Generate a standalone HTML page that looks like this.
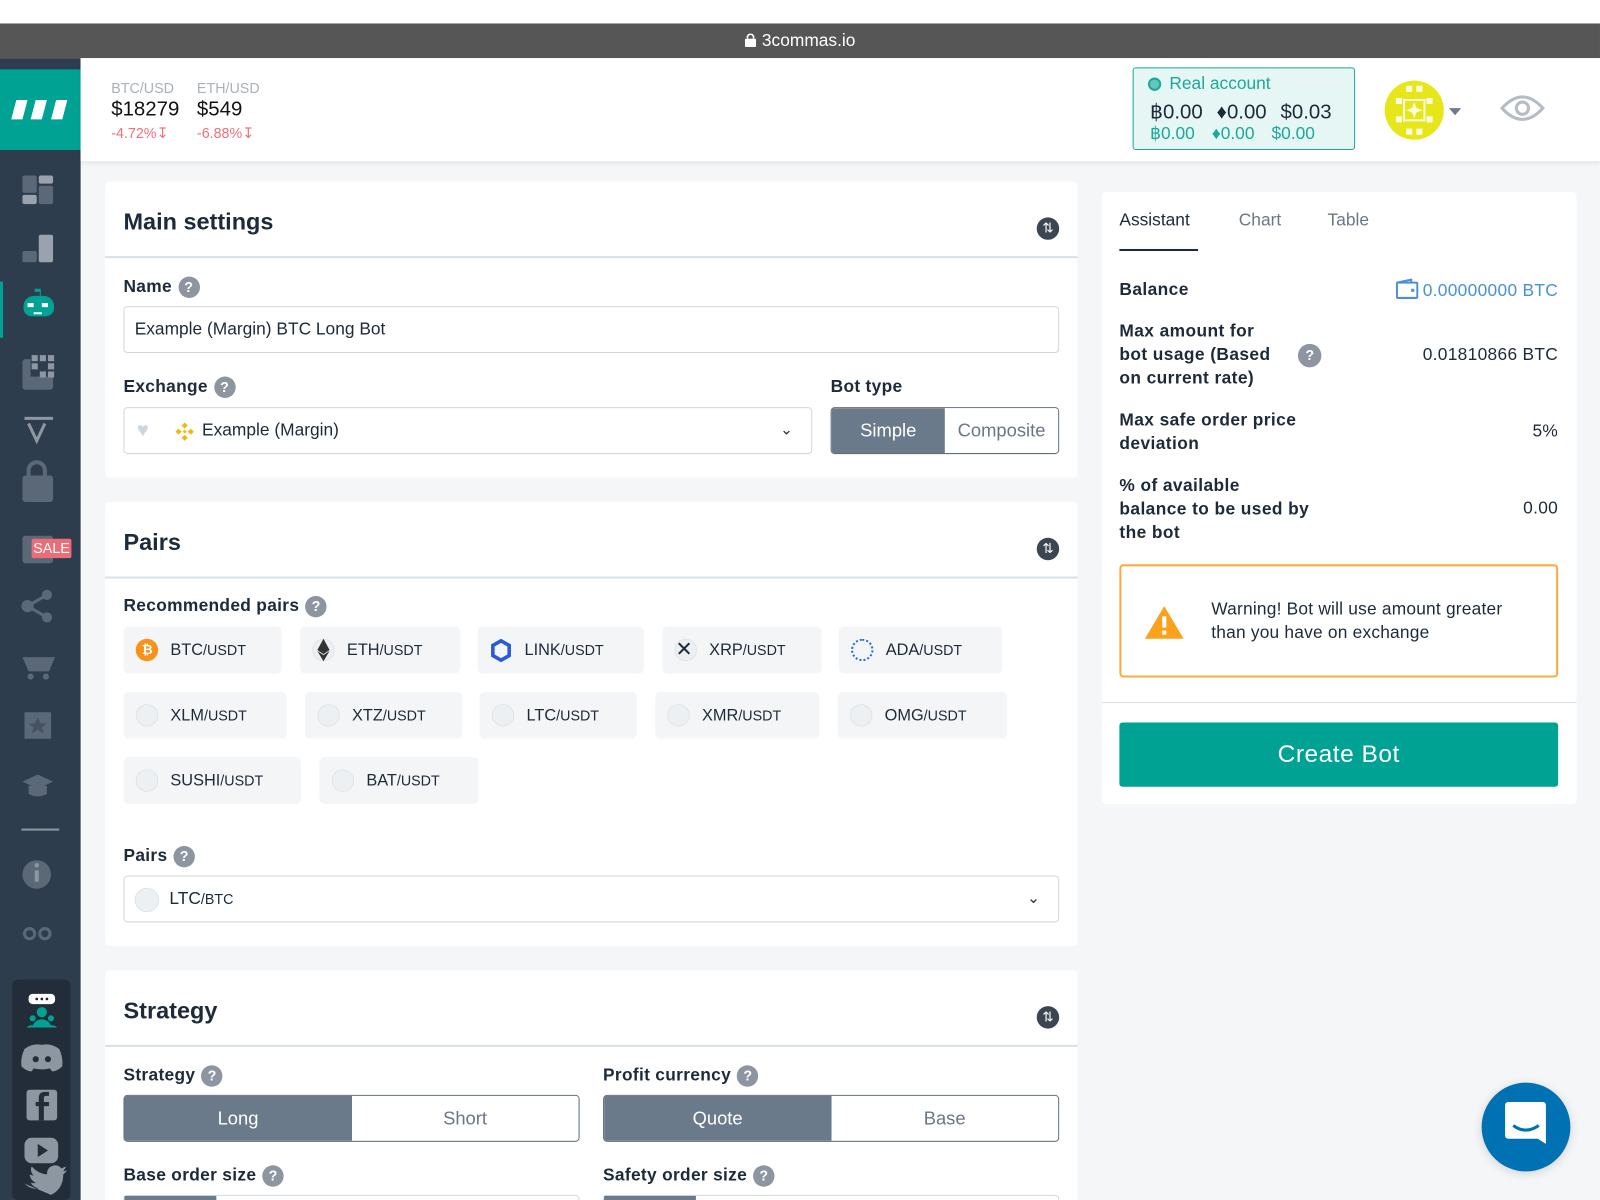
<!DOCTYPE html>
<html><head><meta charset="utf-8">
<style>
html,body{margin:0;padding:0;width:1600px;height:1200px;overflow:hidden;background:#f5f6f8;}
#w{position:absolute;left:0;top:0;width:1568px;height:1176px;transform:scale(1.0204);transform-origin:0 0;font-family:"Liberation Sans",sans-serif;color:#1d2a3a;background:#f5f6f8;overflow:hidden}
.a{position:absolute}
.card{position:absolute;background:#fff;border-radius:4px}
.h{position:absolute;left:18px;font-size:23px;font-weight:bold;color:#1d2a3a}
.div{position:absolute;left:0;right:0;height:2px;background:#d7e1e8}
.tog{position:absolute;width:22px;height:22px;border-radius:50%;background:#3b4650}
.tog:after{content:"⇅";position:absolute;left:0;top:1px;width:22px;text-align:center;color:#fff;font-size:13px;line-height:20px}
.lbl{position:absolute;font-size:17px;font-weight:bold;color:#1d2a3a;letter-spacing:.3px}
.q{display:inline-block;width:21px;height:21px;border-radius:50%;background:#8d96a0;color:#fff;font-size:14px;text-align:center;line-height:21px;vertical-align:middle;margin-left:6px;font-weight:bold}
.inp{position:absolute;border:1px solid #cfd7de;border-radius:4px;background:#fff;box-sizing:border-box;font-size:17px;line-height:44px}
.chip{position:absolute;height:46px;background:#f4f5f7;border-radius:5px;font-size:16px;line-height:46px;box-sizing:border-box;padding-left:46px;color:#1d2a3a}
.chip small{font-size:14px}
.chip i{position:absolute;left:12px;top:12px;width:22px;height:22px;border-radius:50%;background:#edf0f2;border:1px solid #e0e4e8;box-sizing:border-box}
.seg{position:absolute;border:1px solid #5f6e7e;border-radius:4px;box-sizing:border-box;overflow:hidden;display:flex;font-size:18px;line-height:44px;text-align:center}
.seg div{flex:1;color:#6b7785;background:#fff}
.seg div.on{background:#6b7a8a;color:#fff}
.rl{position:absolute;left:17px;font-size:17px;font-weight:bold;letter-spacing:.4px;line-height:23px}
.rv{position:absolute;right:18px;font-size:17px;letter-spacing:.3px}
</style></head><body><div id="w">
<div class="a" style="left:0;top:0;width:1568px;height:23px;background:#fff"></div>
<div class="a" style="left:0;top:23px;width:1568px;height:34px;background:#565656;color:#fff;font-size:17px;line-height:34px;text-align:center">
<svg width="11" height="13" viewBox="0 0 11 13" style="vertical-align:-1px;margin-right:6px"><rect x="0" y="5" width="11" height="8" rx="1" fill="#fff"/><path d="M2.5 5V3.5a3 3 0 0 1 6 0V5" stroke="#fff" stroke-width="1.6" fill="none"/></svg>3commas.io</div>
<div class="a" style="left:0;top:57px;width:79px;height:1119px;background:#2e3d4d"></div>
<div class="a" style="left:0;top:68px;width:79px;height:79px;background:#00a294">
<svg width="79" height="79"><g fill="#fff"><path d="M16 30h11l-5 19h-11z"/><path d="M35 30h11l-5 19h-11z"/><path d="M55 30h11l-5 19h-11z"/></g></svg></div>
<div class="a" style="left:80px;top:84px;width:14px;height:50px;background:#2e3d4d;border-radius:0 3px 3px 0;color:#aab;font-size:18px;line-height:48px;text-align:center">›</div>
<div class="a" style="left:0;top:276px;width:3px;height:55px;background:#00a294"></div>
<svg class="a" style="left:0;top:160px" width="79" height="800">
<g fill="#5a6877">
<rect x="22" y="12" width="14" height="17" rx="2"/><rect x="38" y="12" width="14" height="8" rx="2" fill="#9aa3ad"/><rect x="22" y="31" width="14" height="9" rx="2" fill="#9aa3ad"/><rect x="38" y="22" width="14" height="18" rx="2"/>
<rect x="22" y="86" width="14" height="11" rx="2"/><rect x="38" y="70" width="14" height="27" rx="2" fill="#9aa3ad"/>
<rect x="22" y="192" width="30" height="30" rx="3"/><rect x="30" y="187" width="22" height="22" fill="#2e3d4d"/><g fill="#8d97a2"><rect x="31" y="188" width="6" height="6"/><rect x="39" y="188" width="6" height="6"/><rect x="47" y="188" width="6" height="6"/><rect x="31" y="196" width="6" height="6"/><rect x="47" y="196" width="6" height="6"/><rect x="39" y="204" width="6" height="6"/><rect x="47" y="204" width="6" height="6"/></g>
<path d="M24 250h28M28 255l8 17 8-17" stroke="#8d97a2" stroke-width="3" fill="none"/>
<rect x="22" y="306" width="30" height="26" rx="3"/><path d="M28 306v-5a8 8 0 0 1 16 0v5" stroke="#5a6877" stroke-width="4" fill="none"/>
<rect x="22" y="365" width="30" height="27" rx="3"/>
<circle cx="27" cy="434" r="6"/><circle cx="46" cy="423" r="5"/><circle cx="46" cy="445" r="5"/><path d="M27 434l19-11M27 434l19 11" stroke="#5a6877" stroke-width="3"/>
<path d="M22 484h32l-6 14h-20z"/><circle cx="30" cy="503" r="3"/><circle cx="45" cy="503" r="3"/>
<path d="M24 538h26v26h-26z"/><path d="M37 543l3 6h6l-5 4 2 6-6-4-6 4 2-6-5-4h6z" fill="#2e3d4d" opacity=".5"/>
<path d="M22 606l15-7 15 7-15 7z"/><path d="M28 610v8q9 5 18 0v-8"/>
<rect x="21" y="652" width="37" height="2" fill="#8d97a2"/>
<circle cx="36" cy="697" r="14"/><rect x="34" y="693" width="4" height="11" fill="#8d97a2"/><circle cx="36" cy="688" r="2.2" fill="#8d97a2"/>
<circle cx="29" cy="755" r="5" fill="none" stroke="#5a6877" stroke-width="3"/><circle cx="44" cy="755" r="5" fill="none" stroke="#5a6877" stroke-width="3"/>
</g>
<path d="M23 140a10 10 0 0 1 10-10h6v-4h-5v-3h6v7h3a10 10 0 0 1 10 10v2a8 8 0 0 1-8 8h-15a8 8 0 0 1-7-8z" fill="#00a294"/>
<rect x="27" y="137" width="6" height="4" fill="#fff"/><rect x="41" y="137" width="6" height="4" fill="#fff"/><rect x="33" y="146" width="8" height="2" fill="#fff"/>
</svg>
<div class="a" style="left:31px;top:528px;width:39px;height:19px;background:#ec6d78;color:#fff;font-size:14px;line-height:19px;text-align:center;border-radius:2px">SALE</div>
<div class="a" style="left:12px;top:960px;width:57px;height:216px;background:#222d39;border-radius:5px"></div>
<svg class="a" style="left:12px;top:960px" width="57" height="216">
<rect x="16" y="14" width="26" height="10" rx="4" fill="#fff"/><circle cx="24" cy="19" r="1.3" fill="#222"/><circle cx="29" cy="19" r="1.3" fill="#222"/><circle cx="34" cy="19" r="1.3" fill="#222"/>
<circle cx="29" cy="32" r="5" fill="#00a294"/><path d="M20 47a9 8 0 0 1 18 0z" fill="#00a294"/><circle cx="20" cy="38" r="3" fill="#00a294"/><circle cx="38" cy="38" r="3" fill="#00a294"/><path d="M14 47a6 5 0 0 1 10 0zM34 47a6 5 0 0 1 10 0z" fill="#00a294"/>
<path d="M12 68q8-6 17-4q9-2 17 4q4 8 3 17q-5 5-10 5l-2-3q-8 2-16 0l-2 3q-5 0-10-5q-1-9 3-17z" fill="#8d97a2"/><circle cx="23" cy="78" r="3" fill="#222d39"/><circle cx="35" cy="78" r="3" fill="#222d39"/>
<rect x="14" y="108" width="30" height="30" rx="3" fill="#8d97a2"/><path d="M31 138v-14h5v-4h-5v-4q0-2 2-2h3v-4h-4q-6 0-6 6v4h-3v4h3v14z" fill="#222d39"/>
<rect x="12" y="155" width="33" height="25" rx="7" fill="#8d97a2"/><path d="M25 161v13l10-6.5z" fill="#222d39"/>
<path d="M12 200q6 6 14 5q-6-2-8-6q3 1 5 0q-5-2-6-8q2 1 4 1q-4-4-2-9q6 7 15 8q0-8 8-9q4 0 6 3l5-2-3 5 4-1-4 4q0 14-12 20z" fill="#8d97a2"/>
</svg>
<div class="a" style="left:79px;top:57px;width:1489px;height:101px;background:#fff;box-shadow:0 2px 4px rgba(0,0,0,.07)"></div>
<div class="a" style="left:109px;top:78px;font-size:14px;color:#a9b1ba">BTC/USD</div>
<div class="a" style="left:109px;top:96px;font-size:20px;color:#111">$18279</div>
<div class="a" style="left:109px;top:122px;font-size:14px;color:#ef6f7c">-4.72%↧</div>
<div class="a" style="left:193px;top:78px;font-size:14px;color:#a9b1ba">ETH/USD</div>
<div class="a" style="left:193px;top:96px;font-size:20px;color:#111">$549</div>
<div class="a" style="left:193px;top:122px;font-size:14px;color:#ef6f7c">-6.88%↧</div>
<div class="a" style="left:1110px;top:66px;width:218px;height:81px;box-sizing:border-box;background:#e6f6f5;border:1px solid #1aa99a;border-radius:3px"></div>
<div class="a" style="left:1125px;top:76px;width:13px;height:13px;border-radius:50%;background:#66c5bd;border:2px solid #1aa99a;box-sizing:border-box"></div>
<div class="a" style="left:1146px;top:72px;font-size:17px;color:#1aa99a">Real account</div>
<div class="a" style="left:1127px;top:97px;font-size:20px;color:#1d2a3a;word-spacing:8px">฿0.00 ♦0.00 $0.03</div>
<div class="a" style="left:1127px;top:121px;font-size:17px;color:#1aa99a;word-spacing:12px">฿0.00 ♦0.00 $0.00</div>
<svg class="a" style="left:1356px;top:78px" width="80" height="60"><circle cx="30" cy="30" r="29" fill="#e6e61a"/><g fill="#fff" opacity=".85"><rect x="12" y="18" width="6" height="6"/><rect x="42" y="18" width="6" height="6"/><rect x="12" y="36" width="6" height="6"/><rect x="42" y="36" width="6" height="6"/><rect x="22" y="6" width="6" height="6"/><rect x="32" y="6" width="6" height="6"/><rect x="22" y="48" width="6" height="6"/><rect x="32" y="48" width="6" height="6"/><path d="M20 20h20v20h-20z" fill="none" stroke="#fff" stroke-width="2"/><path d="M30 22l3 8-3 8-3-8z"/><path d="M22 30l8-3 8 3-8 3z"/></g><path d="M64 28h12l-6 7z" fill="#6d7a87"/></svg>
<svg class="a" style="left:1470px;top:90px" width="44" height="32"><path d="M2 16q20-22 40 0q-20 22-40 0z" fill="none" stroke="#b5bcc4" stroke-width="3"/><circle cx="22" cy="16" r="6" fill="none" stroke="#b5bcc4" stroke-width="3"/></svg>

<div class="card" style="left:103px;top:178px;width:953px;height:290px">
<div class="h" style="top:26px">Main settings</div>
<div class="tog" style="left:913px;top:35px"></div>
<div class="div" style="top:73px"></div>
<div class="lbl" style="left:18px;top:93px">Name<span class="q">?</span></div>
<div class="inp" style="left:18px;top:122px;width:917px;height:46px;padding-left:10px">Example (Margin) BTC Long Bot</div>
<div class="lbl" style="left:18px;top:191px">Exchange<span class="q">?</span></div>
<div class="inp" style="left:18px;top:221px;width:675px;height:46px;padding-left:76px">Example (Margin)
<span class="a" style="left:12px;top:0;color:#cdd6dd;font-size:20px">♥</span>
<svg class="a" style="left:48px;top:12px" width="22" height="22"><g fill="#f0b90b"><path d="M11 2l3 3-3 3-3-3z"/><path d="M11 14l3 3-3 3-3-3z"/><path d="M2 11l3-3 3 3-3 3z"/><path d="M14 11l3-3 3 3-3 3z"/><path d="M11 9l2 2-2 2-2-2z"/></g></svg>
<span class="a" style="right:18px;top:0;color:#333;font-size:15px">⌄</span></div>
<div class="lbl" style="left:711px;top:191px">Bot type</div>
<div class="seg" style="left:711px;top:221px;width:224px;height:46px"><div class="on">Simple</div><div>Composite</div></div>
</div>

<div class="card" style="left:103px;top:492px;width:953px;height:435px">
<div class="h" style="top:26px">Pairs</div>
<div class="tog" style="left:913px;top:35px"></div>
<div class="div" style="top:73px"></div>
<div class="lbl" style="left:18px;top:92px">Recommended pairs<span class="q">?</span></div>
<div class="chip" style="left:18px;top:122px;width:155px"><i style="background:#f7931a;border:none"></i><span class="a" style="left:18px;top:0;color:#fff;font-size:13px;font-weight:bold">₿</span>BTC<small>/USDT</small></div>
<div class="chip" style="left:191px;top:122px;width:157px"><i></i><svg class="a" style="left:16px;top:12px" width="14" height="22"><path d="M7 0l6 11-6 4-6-4z" fill="#333"/><path d="M7 16l6-4-6 10-6-10z" fill="#333"/></svg>ETH<small>/USDT</small></div>
<div class="chip" style="left:365px;top:122px;width:163px"><svg class="a" style="left:12px;top:12px" width="22" height="24"><path d="M11 2l8 4.5v10l-8 4.5-8-4.5v-10z" fill="none" stroke="#2a5ada" stroke-width="3.5"/></svg>LINK<small>/USDT</small></div>
<div class="chip" style="left:546px;top:122px;width:156px"><i></i><span class="a" style="left:13px;top:0;font-size:20px">✕</span>XRP<small>/USDT</small></div>
<div class="chip" style="left:719px;top:122px;width:160px"><i style="background:none;border:2px dotted #2a6ad8"></i>ADA<small>/USDT</small></div>
<div class="chip" style="left:18px;top:186px;width:160px"><i></i>XLM<small>/USDT</small></div>
<div class="chip" style="left:196px;top:186px;width:154px"><i></i>XTZ<small>/USDT</small></div>
<div class="chip" style="left:367px;top:186px;width:154px"><i></i>LTC<small>/USDT</small></div>
<div class="chip" style="left:539px;top:186px;width:161px"><i></i>XMR<small>/USDT</small></div>
<div class="chip" style="left:718px;top:186px;width:166px"><i></i>OMG<small>/USDT</small></div>
<div class="chip" style="left:18px;top:250px;width:174px"><i></i>SUSHI<small>/USDT</small></div>
<div class="chip" style="left:210px;top:250px;width:156px"><i></i>BAT<small>/USDT</small></div>
<div class="lbl" style="left:18px;top:337px">Pairs<span class="q">?</span></div>
<div class="inp" style="left:18px;top:366px;width:917px;height:46px;padding-left:44px">LTC<small style="font-size:14px">/BTC</small>
<span class="a" style="left:10px;top:11px;width:22px;height:22px;border-radius:50%;background:#edf0f2;border:1px solid #e0e4e8"></span>
<span class="a" style="right:18px;top:0;color:#333;font-size:15px">⌄</span></div>
</div>

<div class="card" style="left:103px;top:951px;width:953px;height:260px">
<div class="h" style="top:26px">Strategy</div>
<div class="tog" style="left:913px;top:35px"></div>
<div class="div" style="top:73px"></div>
<div class="lbl" style="left:18px;top:93px">Strategy<span class="q">?</span></div>
<div class="lbl" style="left:488px;top:93px">Profit currency<span class="q">?</span></div>
<div class="seg" style="left:18px;top:122px;width:447px;height:46px"><div class="on">Long</div><div>Short</div></div>
<div class="seg" style="left:488px;top:122px;width:447px;height:46px"><div class="on">Quote</div><div>Base</div></div>
<div class="lbl" style="left:18px;top:191px">Base order size<span class="q">?</span></div>
<div class="lbl" style="left:488px;top:191px">Safety order size<span class="q">?</span></div>
<div class="a" style="left:18px;top:220px;width:447px;height:40px;border:1px solid #cfd7de;border-radius:4px;box-sizing:border-box"><div style="width:90px;height:100%;background:#6b7a8a"></div></div>
<div class="a" style="left:488px;top:220px;width:447px;height:40px;border:1px solid #cfd7de;border-radius:4px;box-sizing:border-box"><div style="width:90px;height:100%;background:#6b7a8a"></div></div>
</div>

<div class="card" style="left:1080px;top:188px;width:465px;height:600px">
<div class="a" style="left:17px;top:18px;font-size:17px;color:#1d2a3a">Assistant</div>
<div class="a" style="left:134px;top:18px;font-size:17px;color:#6b7785">Chart</div>
<div class="a" style="left:221px;top:18px;font-size:17px;color:#6b7785">Table</div>
<div class="a" style="left:17px;top:56px;width:77px;height:2px;background:#1d2a3a"></div>
<div class="rl" style="top:84px">Balance</div>
<div class="rv" style="top:85px;color:#4a90d9">
<svg width="22" height="20" style="vertical-align:-3px;margin-right:4px"><rect x="1" y="4" width="20" height="15" rx="1" fill="none" stroke="#4a90d9" stroke-width="2"/><path d="M1 4l14-3v3" fill="none" stroke="#4a90d9" stroke-width="2"/><rect x="15" y="10" width="3" height="3" fill="#4a90d9"/></svg>0.00000000 BTC</div>
<div class="rl" style="top:125px">Max amount for<br>bot usage (Based<br>on current rate)</div>
<span class="q a" style="left:186px;top:149px;width:23px;height:23px;line-height:23px">?</span>
<div class="rv" style="top:150px">0.01810866 BTC</div>
<div class="rl" style="top:212px">Max safe order price<br>deviation</div>
<div class="rv" style="top:225px">5%</div>
<div class="rl" style="top:276px">% of available<br>balance to be used by<br>the bot</div>
<div class="rv" style="top:300px">0.00</div>
<div class="a" style="left:17px;top:365px;width:430px;height:111px;border:2px solid #fbaa3c;border-radius:4px;box-sizing:border-box">
<svg class="a" style="left:22px;top:38px" width="40" height="34"><path d="M20 1l19 32H1z" fill="#fba21c"/><rect x="18" y="11" width="4" height="11" fill="#fff"/><rect x="18" y="25" width="4" height="4" fill="#fff"/></svg>
<div class="a" style="left:88px;top:30px;font-size:17px;line-height:23px;letter-spacing:.2px">Warning! Bot will use amount greater<br>than you have on exchange</div></div>
<div class="a" style="left:0;top:500px;width:465px;height:1px;background:#d7e1e8"></div>
<div class="a" style="left:17px;top:520px;width:430px;height:63px;background:#00a294;border-radius:3px;color:#fff;font-size:24px;line-height:63px;text-align:center;letter-spacing:.5px">Create Bot</div>
</div>

<div class="a" style="left:1452px;top:1061px;width:87px;height:87px;border-radius:50%;background:#0071b2;box-shadow:0 2px 10px rgba(0,0,0,.15)"></div>
<svg class="a" style="left:1472px;top:1078px" width="48" height="50"><path d="M3 5a3 3 0 0 1 3-3h34a3 3 0 0 1 3 3v38l-8-5h-29a3 3 0 0 1-3-3z" fill="#fff"/><path d="M11 25q12 9 25 0" stroke="#0071b2" stroke-width="3" fill="none"/></svg>
</div></body></html>
